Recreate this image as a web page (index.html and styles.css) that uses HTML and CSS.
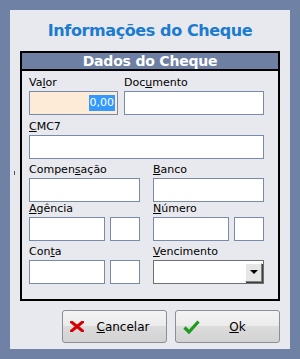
FILE: index.html
```html
<!DOCTYPE html>
<html lang="pt-BR">
<head>
  <meta charset="UTF-8" />
  <title>Informações do Cheque</title>
  <link rel="stylesheet" href="styles.css">
</head>
<body>
<div class="window">
  <div class="panel">
    <span class="tick"></span>
    <h1 class="title">Informações do Cheque</h1>

    <div class="group">
      <div class="groupHead">Dados do Cheque</div>
      <div class="groupBody">
        <div class="row r1">
          <div class="field w89">
            <label>Va<u>l</u>or</label>
            <div class="input valor"><span class="sel">0,00</span></div>
          </div>
          <div class="field w140">
            <label>Doc<u>u</u>mento</label>
            <div class="input"></div>
          </div>
        </div>

        <div class="row r2">
          <div class="field w235">
            <label><u>C</u>MC7</label>
            <div class="input"></div>
          </div>
        </div>

        <div class="row r3 split">
          <div class="field w111">
            <label>Compen<u>s</u>ação</label>
            <div class="input"></div>
          </div>
          <div class="field w111">
            <label><u>B</u>anco</label>
            <div class="input"></div>
          </div>
        </div>

        <div class="row r4 split">
          <div class="field w111">
            <label><u>A</u>gência</label>
            <div class="pair"><div class="input big"></div><div class="input small"></div></div>
          </div>
          <div class="field w111">
            <label><u>N</u>úmero</label>
            <div class="pair"><div class="input big"></div><div class="input small"></div></div>
          </div>
        </div>

        <div class="row r5 split">
          <div class="field w111">
            <label>Con<u>t</u>a</label>
            <div class="pair"><div class="input big"></div><div class="input small"></div></div>
          </div>
          <div class="field w111">
            <label><u>V</u>encimento</label>
            <div class="input combo"><span class="dropBtn"><span class="arrow"></span></span></div>
          </div>
        </div>
      </div>
    </div>

    <div class="actions">
      <button class="btn">
        <svg class="icon" width="14" height="11" viewBox="0 0 14 11">
          <path d="M1.5 1 L12.5 10 M12.5 1 L1.5 10" stroke="#d60000" stroke-width="3" stroke-linecap="square"/>
        </svg>
        <span class="btnText"><u>C</u>ancelar</span>
      </button>
      <button class="btn">
        <svg class="icon" width="17" height="14" viewBox="0 0 17 14">
          <path d="M1.5 7.5 L6 12 L15.5 1.5" fill="none" stroke="#1f9a1f" stroke-width="3.2" stroke-linejoin="miter"/>
        </svg>
        <span class="btnText"><u>O</u>k</span>
      </button>
    </div>
  </div>
</div>
</body>
</html>
```

FILE: styles.css
```css
* { box-sizing: border-box; }
body { margin: 0; background: #6f81a5; font-family: "DejaVu Sans", Tahoma, sans-serif; font-size: 11px; color: #000; }
.window { width: 300px; height: 359px; padding: 10px; }
.panel { position: relative; height: 339px; background: #e8e9ee; }
.tick { position: absolute; left: 4px; top: 161px; width: 1px; height: 4px; background: #5a4a6a; }

.title {
  margin: 0; height: 41px; line-height: 42px;
  text-align: center; font-size: 16px; font-weight: bold; color: #1b7bce;
  letter-spacing: -0.4px;
}

.group { margin: 0 10px; height: 250px; border: 2px solid #000; display: flex; flex-direction: column; }
.groupHead {
  height: 18px; line-height: 16px; background: #6d7fa3; color: #fff;
  font-size: 14px; font-weight: bold; text-align: center; letter-spacing: -0.2px;
  border-bottom: 2px solid #000;
}
.groupBody { padding: 4px 0 0 7px; }

.row { display: flex; gap: 6px; }
.row.split { gap: 13px; }
.r2 { margin-top: 4px; }
.r3 { margin-top: 3px; }
.r4 { margin-top: -1px; }
.r5 { margin-top: 3px; }

.field label { display: block; height: 16px; line-height: 16px; white-space: nowrap; }
.w89 { width: 89px; }
.w140 { width: 140px; }
.w235 { width: 235px; }
.w111 { width: 111px; }

.input { height: 24px; background: #fff; border: 1px solid #7a8ba9; }
.valor { background: #fdebd7; display: flex; justify-content: flex-end; align-items: center; padding-right: 2px; }
.sel { background: #3399ff; color: #fff; line-height: 16px; padding: 0 1px; }

.pair { display: flex; gap: 5px; }
.pair .big { width: 76px; }
.pair .small { width: 30px; }

.combo { border-color: #707070; display: flex; justify-content: flex-end; align-items: center; padding-right: 1px; }
.dropBtn {
  width: 17px; height: 19px; background: #e6e6e6;
  border: 1px solid; border-color: #fff #808080 #808080 #fff;
  box-shadow: 1px 1px 0 #404040;
  display: flex; align-items: center; justify-content: center;
}
.arrow { width: 0; height: 0; border-left: 4px solid transparent; border-right: 4px solid transparent; border-top: 4px solid #000; }

.actions { display: flex; justify-content: flex-end; gap: 8px; padding: 9px 10px 0 0; }
.btn {
  width: 105px; height: 33px; padding: 0 0 0 7px;
  border: 1px solid #8d8e8f; border-radius: 3px;
  background: linear-gradient(#f4f4f4 0%, #ebebeb 48%, #dcdcdc 50%, #d2d2d2 100%);
  font-family: inherit; font-size: 12px; color: #000;
  display: flex; align-items: center;
}
.btnText { flex: 1; text-align: center; padding-right: 4px; }
```
